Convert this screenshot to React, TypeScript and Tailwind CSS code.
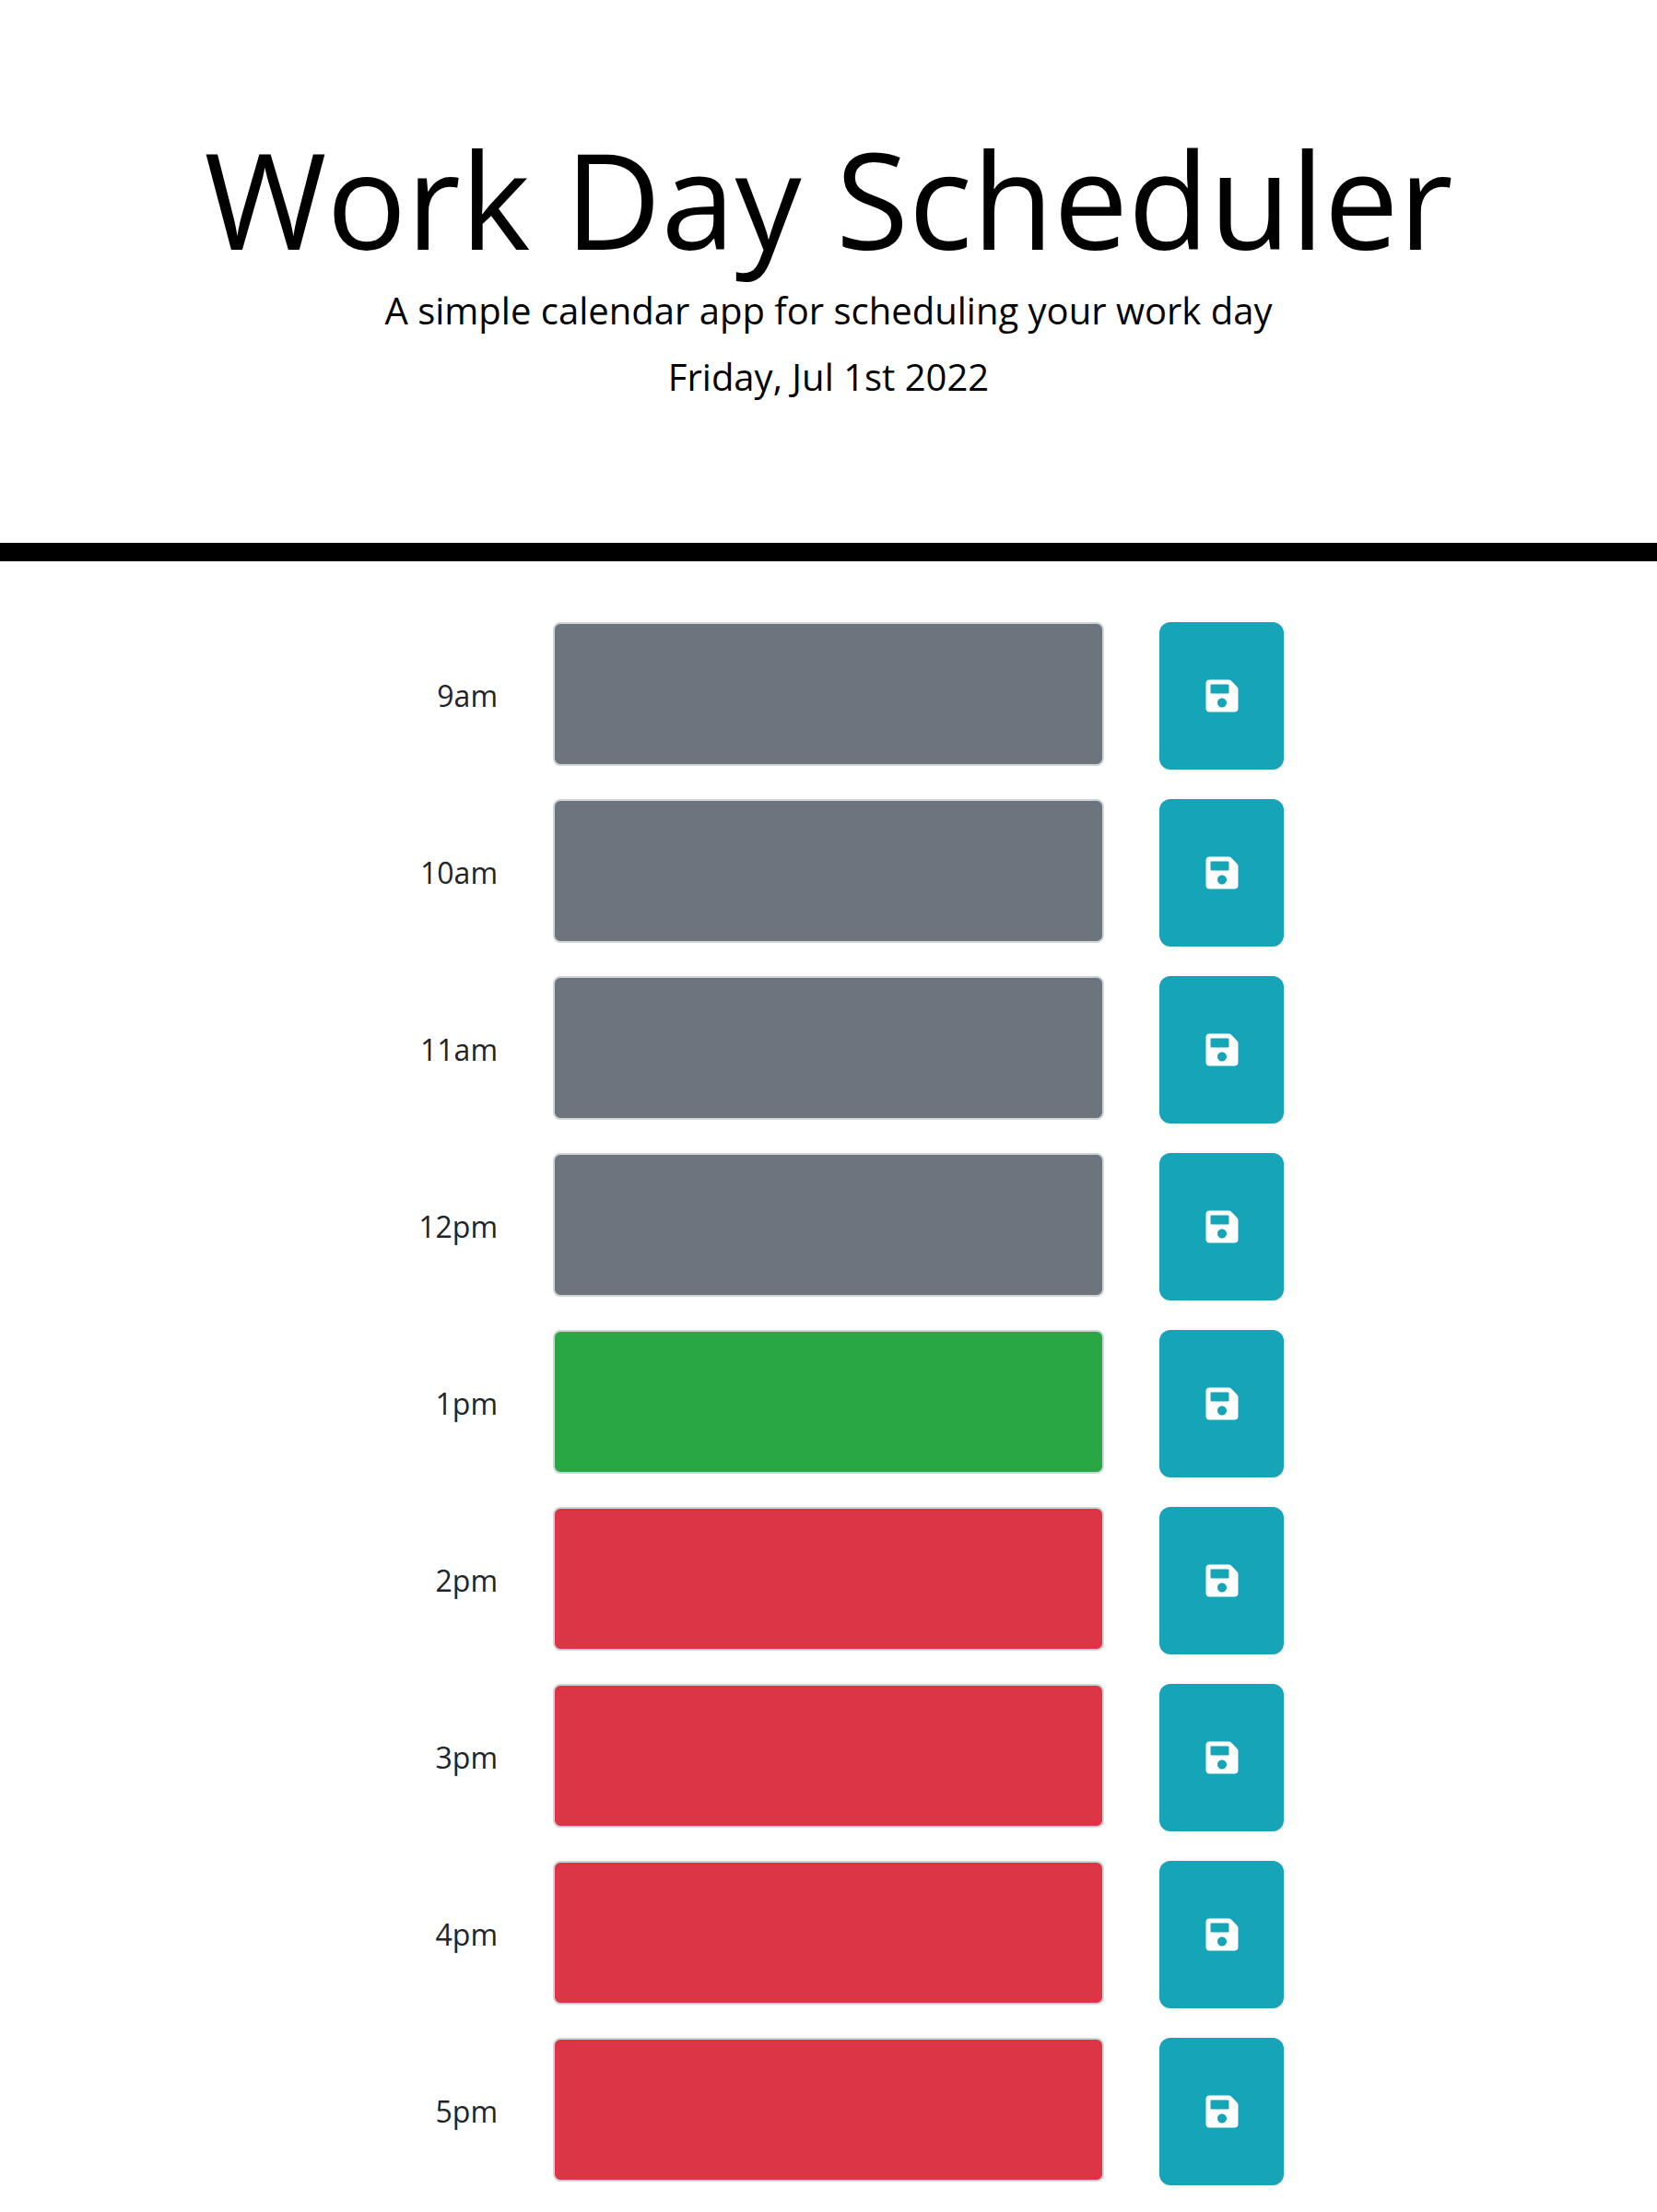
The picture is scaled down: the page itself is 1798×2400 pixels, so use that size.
import React from "react";
import { FaSave } from "react-icons/fa";

const hours = [
  { label: "9am", color: "bg-[#6c757d]" },
  { label: "10am", color: "bg-[#6c757d]" },
  { label: "11am", color: "bg-[#6c757d]" },
  { label: "12pm", color: "bg-[#6c757d]" },
  { label: "1pm", color: "bg-[#29a745]" },
  { label: "2pm", color: "bg-[#dc3545]" },
  { label: "3pm", color: "bg-[#dc3545]" },
  { label: "4pm", color: "bg-[#dc3545]" },
  { label: "5pm", color: "bg-[#dc3545]" },
];

export default function App() {
  return (
    <div className="h-[2400px] overflow-hidden bg-white font-['Open_Sans',sans-serif] text-[#212529]">
      {/* Header */}
      <header className="h-[589px] pt-[136px] text-center text-black">
        <h1 className="text-[144px] leading-[158px] font-normal">Work Day Scheduler</h1>
        <p className="mt-[13px] text-[40px] leading-[60px]">A simple calendar app for scheduling your work day</p>
        <p className="mt-[12px] text-[40px] leading-[60px]">Friday, Jul 1st 2022</p>
      </header>
      <div className="h-[20px] bg-black" />

      {/* Time blocks */}
      <main className="mt-[66px] flex flex-col items-center gap-[32px]">
        {hours.map((hour) => (
          <div key={hour.label} className="flex w-[988px] items-start">
            <div className="w-[135px] self-center text-right text-[32px] leading-[48px]">{hour.label}</div>
            <textarea
              aria-label={hour.label}
              className={`ml-[60px] h-[156px] w-[598px] resize-none rounded-[8px] border-2 border-[#ced4da] ${hour.color}`}
            />
            <button className="ml-[60px] flex h-[160px] w-[135px] items-center justify-center rounded-[12px] bg-[#16a4b8] text-white">
              <FaSave size={40} />
            </button>
          </div>
        ))}
      </main>
    </div>
  );
}
